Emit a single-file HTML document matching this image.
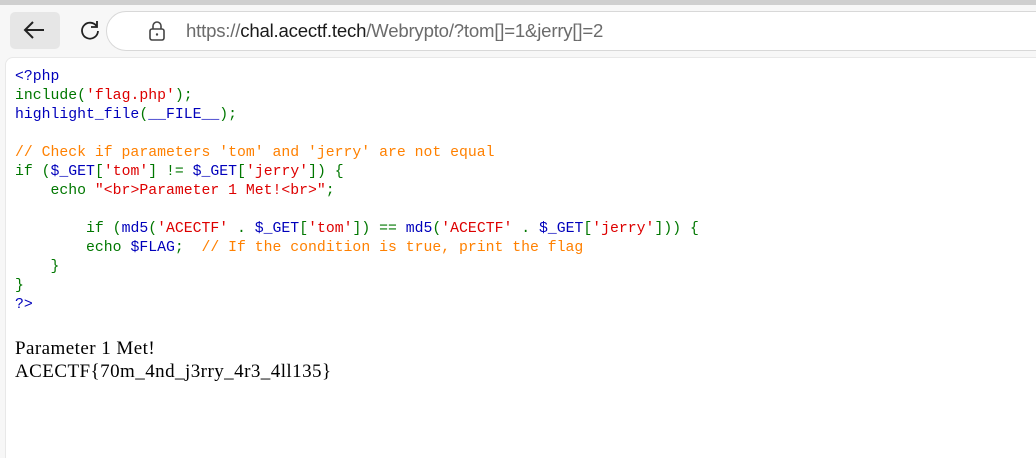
<!DOCTYPE html>
<html><head><style>
body{margin:0;width:1036px;height:441px;overflow:hidden;background:#f7f7f7;position:relative;font-family:"Liberation Sans",sans-serif}
.top{position:absolute;left:0;top:0;width:1036px;height:5px;background:#cfcfcf}
.back{position:absolute;left:10px;top:12px;width:50px;height:37px;background:#e6e6e6;border-radius:5px}
.addr{position:absolute;left:106px;top:11px;width:960px;height:38px;border:1px solid #d8d8d8;border-radius:20px;background:#fff}
.url{position:absolute;left:186px;top:20px;font-size:18.6px;color:#6b6b6b;letter-spacing:-0.2px}
.url b{font-weight:normal;color:#1a1a1a}
.page{position:absolute;left:5px;top:57px;width:1040px;height:400px;background:#fff;border-top-left-radius:8px;border-left:1px solid #e8e8e8;border-top:1px solid #e8e8e8}
pre{position:absolute;left:15px;top:68px;margin:0;font-family:"Liberation Mono",monospace;font-size:14.8px;line-height:19px;color:#0000bb}
.k{color:#007700}.s{color:#dd0000}.c{color:#ff8000}
.out{position:absolute;left:15px;top:337px;font-family:"Liberation Serif",serif;font-size:19px;letter-spacing:0.45px;line-height:23px;color:#000}
</style></head><body>
<div class="top"></div>
<div class="back"></div>
<svg style="position:absolute;left:22px;top:20px" width="24" height="20" viewBox="0 0 24 20"><path d="M22 10H3M11 2L3 10l8 8" fill="none" stroke="#222" stroke-width="2"/></svg>
<svg style="position:absolute;left:79px;top:19px" width="22" height="22" viewBox="0 0 22 22"><path d="M17.5 7A8 8 0 1 0 19 12" fill="none" stroke="#222" stroke-width="1.8"/><path d="M18 2v6h-6" fill="none" stroke="#222" stroke-width="1.8"/></svg>
<div class="addr"></div>
<svg style="position:absolute;left:148px;top:21px" width="18" height="20" viewBox="0 0 18 20"><rect x="2" y="8" width="14" height="11" rx="2" fill="none" stroke="#444" stroke-width="1.6"/><path d="M5 8V5a4 4 0 0 1 8 0v3" fill="none" stroke="#444" stroke-width="1.6"/><circle cx="9" cy="13.5" r="1.2" fill="#444"/></svg>
<div class="url">https://<b>chal.acectf.tech</b>/Webrypto/?tom[]=1&amp;jerry[]=2</div>
<div class="page"></div>
<pre>&lt;?php
<span class="k">include(</span><span class="s">'flag.php'</span><span class="k">);</span>
highlight_file<span class="k">(</span>__FILE__<span class="k">);</span>

<span class="c">// Check if parameters 'tom' and 'jerry' are not equal</span>
<span class="k">if (</span>$_GET<span class="k">[</span><span class="s">'tom'</span><span class="k">] != </span>$_GET<span class="k">[</span><span class="s">'jerry'</span><span class="k">]) {</span>
<span class="k">    echo </span><span class="s">"&lt;br&gt;Parameter 1 Met!&lt;br&gt;"</span><span class="k">;</span>

<span class="k">        if (</span>md5<span class="k">(</span><span class="s">'ACECTF' </span><span class="k">. </span>$_GET<span class="k">[</span><span class="s">'tom'</span><span class="k">]) == </span>md5<span class="k">(</span><span class="s">'ACECTF' </span><span class="k">. </span>$_GET<span class="k">[</span><span class="s">'jerry'</span><span class="k">])) {</span>
<span class="k">        echo </span>$FLAG<span class="k">;  </span><span class="c">// If the condition is true, print the flag</span>
<span class="k">    }
}</span>
?&gt;</pre>
<div class="out">Parameter 1 Met!<br>ACECTF{70m_4nd_j3rry_4r3_4ll135}</div>
</body></html>
